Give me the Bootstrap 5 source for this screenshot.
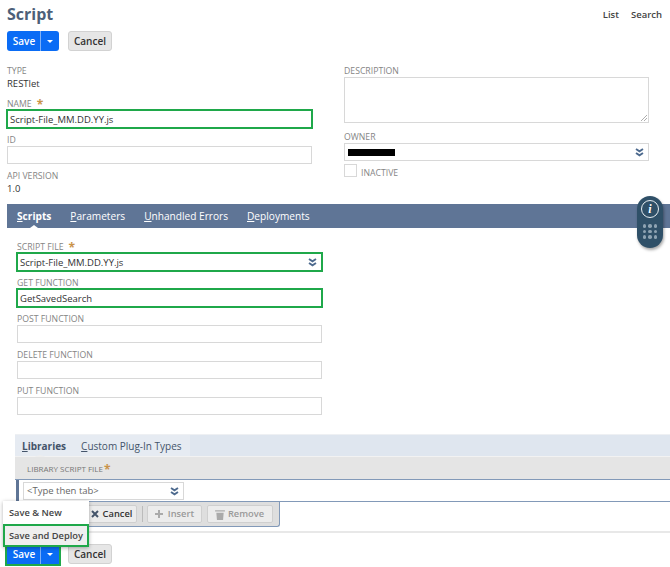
<!DOCTYPE html>
<html lang="en">
<head>
<meta charset="utf-8">
<title>Script</title>
<link href="https://cdn.jsdelivr.net/npm/bootstrap@5.3.0/dist/css/bootstrap.min.css" rel="stylesheet">
<style>
html,body{margin:0;height:567px;overflow:hidden;background:#fff}
body{width:670px;position:relative;font-family:"Open Sans",sans-serif;font-size:9.5px;color:#333;line-height:12px}
.page-head{height:31px;padding:0 7px}
.page-title{font-size:16px;line-height:28px;font-weight:700;color:#4d5f79;margin:0}
.head-links{gap:12px;padding:9px 1px 0 0;font-size:9.5px;font-weight:600;color:#444}
.action-bar{padding-left:7px;gap:9px;height:20px}
.save-group{height:20px;border-radius:3px;background:#0a6cf5;overflow:hidden;color:#fff;font-size:10px;font-weight:600}
.save-main{width:34px;padding-left:1px;text-align:center;line-height:20px;border-right:1px solid #7fb0f5}
.save-drop{width:18px;display:flex;align-items:center;justify-content:center}
.save-caret{width:0;height:0;border-left:3.5px solid transparent;border-right:3.5px solid transparent;border-top:3.5px solid #fff}
.cancel-btn{height:20px;width:44px;border:1px solid #d2d2d2;border-radius:3px;background:#e6e6e6;color:#333;font-size:10px;font-weight:600;line-height:18px;text-align:center}
.main-cols{padding:14px 0 0 7px;gap:32px;height:153px}
.field-col{width:305px}
.fld-label{height:12px;line-height:13px;color:#858585;font-size:8.7px;text-transform:uppercase;white-space:nowrap}
.req{color:#c9934a;font-size:12px;font-weight:700;margin-left:5px;line-height:10px;vertical-align:-2px}
.fld-value{height:12px;line-height:12px;margin-top:1px;color:#333;font-size:9.5px}
.fld-box{height:18px;border:1px solid #d8d8d8;background:#fff;font-size:9.5px;line-height:16px;padding:0 4px 0 2px;color:#333;display:flex;align-items:center;justify-content:space-between}
.fld-green{height:20px;margin:-1px -1px;border:2px solid #1fa84a;padding:1px 4px 0 2px}
.gap-a{margin-top:8px}
.gap-b{margin-top:6px}
.desc-box{height:46px;border:1px solid #d8d8d8;position:relative}
.resize-mark{position:absolute;right:1px;bottom:1px}
.owner-bar{width:47px;height:7px;background:#000;margin-left:1px}
.gap-c{margin-top:8px}
.check-row{gap:4px;margin-top:3px;height:14px}
.check-box{width:13px;height:13px;border:1px solid #d8d8d8}
.check-text{padding-top:3px;color:#858585;font-size:8.7px}
.tab-bar{margin-left:7px;height:24px;background:#5f7596;padding-left:10px;gap:19px;color:#fff;font-size:10.15px;line-height:25px;position:relative}
.tab-on{font-weight:700;position:relative}
.tab-on::after{content:"";position:absolute;left:50%;bottom:0;margin-left:-4px;border-left:4px solid transparent;border-right:4px solid transparent;border-bottom:3px solid #fff}
.tab-key{text-decoration:underline}
.script-fields{margin:13px 0 0 17px;width:305px;height:174px}
.sub-tabs{margin:19px 0 0 15px;height:22px;background:#dfe6ef;border-top:1px solid #eef0f3}
.sub-tab-area{width:175px;background:#e6ebf2;padding-left:7px;gap:15px;font-size:10px;line-height:22px;color:#44546a}
.sub-on{font-weight:700;position:relative}
.sub-on::after{content:"";position:absolute;left:12px;bottom:-1px;border-left:6px solid transparent;border-right:6px solid transparent;border-bottom:2px solid #eee}
.lib-head{margin-left:15px;height:24px;background:#e5e5e5;border-top:1px solid #f2f2f2;border-bottom:1px solid #8299b8;padding:6px 0 0 12px;font-size:8px;color:#777;text-transform:uppercase}
.lib-head .req{margin-left:1px}
.lib-row{margin-left:16px;height:22px;background:#fff;border-left:3px solid #5f7596;border-bottom:1px solid #8299b8;padding:2px 0 0 4px}
.lib-input{width:161px;height:18px;border:1px solid #d8d8d8;padding:0 4px 0 3px;color:#666;font-size:9.5px;display:flex;align-items:center;justify-content:space-between}
.lib-tools{margin-left:19px;width:261px;height:25px;background:#dedede;border:1px solid #8299b8;border-top:0;border-radius:0 0 3px 3px;padding:3px 0 0 66px;gap:4.5px}
.tool-btn{height:18px;background:#ececec;border:1px solid #cfcfcf;border-radius:2px;font-size:9.3px;font-weight:600;line-height:16px;color:#333;display:flex;align-items:center;justify-content:center;gap:4px}
.tool-off{color:#999}
.tool-cancel{width:51px}
.tool-sep{width:1px;height:16px;margin-top:1px;background:#bbb}
.tool-insert{width:55px;gap:5px}
.tool-remove{width:66px;gap:3px}
.end-rule{height:2px;background:#e8e8e8;margin:4px 0 0 15px}
.bottom-bar{padding:11px 0 0 7px;gap:9px;position:relative}
.green-ring{outline:2px solid #1fa84a;outline-offset:0;border-radius:0}
.save-menu{position:absolute;left:3px;top:501px;width:86px;height:46px;background:#fff;box-shadow:0 1px 4px rgba(0,0,0,.3);font-size:9.3px;font-weight:600;color:#444;z-index:5;white-space:nowrap}
.menu-item{height:23px;line-height:23px;padding-left:6px}
.menu-hot{background:#efefef;border:2px solid #1fa84a;line-height:19px;padding-left:4px}
.help-pod{position:absolute;left:637px;top:196px;width:26px;height:52px;background:#2f5068;border-radius:13px;box-shadow:1px 2px 3px rgba(0,0,0,.35);z-index:5;display:flex;flex-direction:column;align-items:center;padding-top:4px}
.help-info{width:18px;height:18px;border:1px solid #e8eef2;border-radius:50%;color:#fff;font-family:"Liberation Serif",serif;font-style:italic;font-weight:700;font-size:12px;line-height:16px;text-align:center}
.help-dots{display:grid;grid-template-columns:repeat(3,3.500px);gap:2px;margin-top:6px}
.help-dots span{width:3.5px;height:3.5px;border-radius:50%;background:#8ea3b2}
.chev{fill:none;stroke:#4d6a8e;stroke-width:1.9}
</style>
</head>
<body>
<div class="page-head d-flex justify-content-between">
  <h1 class="page-title">Script</h1>
  <div class="head-links d-flex"><span>List</span><span>Search</span></div>
</div>
<div class="action-bar d-flex">
  <div class="save-group d-flex"><div class="save-main">Save</div><div class="save-drop"><span class="save-caret"></span></div></div>
  <div class="cancel-btn">Cancel</div>
</div>
<div class="main-cols d-flex">
  <div class="field-col">
    <div class="fld-label">Type</div>
    <div class="fld-value">RESTlet</div>
    <div class="fld-label gap-a">Name<span class="req">*</span></div>
    <div class="fld-box fld-green">Script-File_MM.DD.YY.js</div>
    <div class="fld-label gap-b">ID</div>
    <div class="fld-box"></div>
    <div class="fld-label gap-b">API Version</div>
    <div class="fld-value">1.0</div>
  </div>
  <div class="field-col">
    <div class="fld-label">Description</div>
    <div class="desc-box"><svg class="resize-mark" width="7" height="7" viewBox="0 0 7 7"><path d="M1 7 7 1M4 7 7 4" stroke="#999" stroke-width=".8" fill="none"/></svg></div>
    <div class="fld-label gap-c">Owner</div>
    <div class="fld-box"><span class="owner-bar"></span><svg width="9" height="9" viewBox="0 0 9 9"><path class="chev" d="M1 1 4.500 3.300 8 1M1 5 4.500 7.300 8 5"/></svg></div>
    <div class="check-row d-flex"><span class="check-box"></span><span class="check-text">INACTIVE</span></div>
  </div>
</div>
<div class="tab-bar d-flex">
  <span class="tab-on"><span class="tab-key">S</span>cripts</span>
  <span><span class="tab-key">P</span>arameters</span>
  <span><span class="tab-key">U</span>nhandled Errors</span>
  <span><span class="tab-key">D</span>eployments</span>
</div>
<div class="script-fields">
  <div class="fld-label">Script File<span class="req">*</span></div>
  <div class="fld-box fld-green">Script-File_MM.DD.YY.js<svg width="9" height="9" viewBox="0 0 9 9"><path class="chev" d="M1 1 4.500 3.300 8 1M1 5 4.500 7.300 8 5"/></svg></div>
  <div class="fld-label gap-b">Get Function</div>
  <div class="fld-box fld-green">GetSavedSearch</div>
  <div class="fld-label gap-b">Post Function</div>
  <div class="fld-box"></div>
  <div class="fld-label gap-b">Delete Function</div>
  <div class="fld-box"></div>
  <div class="fld-label gap-b">Put Function</div>
  <div class="fld-box"></div>
</div>
<div class="sub-tabs d-flex">
  <div class="sub-tab-area d-flex"><span class="sub-on"><span class="tab-key">L</span>ibraries</span><span><span class="tab-key">C</span>ustom Plug-In Types</span></div>
</div>
<div class="lib-head">Library Script File<span class="req">*</span></div>
<div class="lib-row"><div class="lib-input">&lt;Type then tab&gt;<svg width="9" height="9" viewBox="0 0 9 9"><path class="chev" d="M1 1 4.500 3.300 8 1M1 5 4.500 7.300 8 5"/></svg></div></div>
<div class="lib-tools d-flex">
  <div class="tool-btn tool-cancel"><svg width="8" height="8" viewBox="0 0 8 8"><path d="M1 1 7 7M7 1 1 7" stroke="#44546a" stroke-width="2"/></svg>Cancel</div>
  <span class="tool-sep"></span>
  <div class="tool-btn tool-off tool-insert"><svg width="8" height="8" viewBox="0 0 8 8"><path d="M4 0V8M0 4H8" stroke="#aaa" stroke-width="2"/></svg>Insert</div>
  <div class="tool-btn tool-off tool-remove"><svg width="10" height="11" viewBox="0 0 8 9"><path d="M0 1H8V2H0ZM1 3H7L6.500 9H1.500Z" fill="#aaa"/></svg>Remove</div>
</div>
<div class="end-rule"></div>
<div class="bottom-bar d-flex">
  <div class="save-group green-ring d-flex"><div class="save-main">Save</div><div class="save-drop"><span class="save-caret"></span></div></div>
  <div class="cancel-btn">Cancel</div>
</div>
<div class="save-menu">
  <div class="menu-item">Save &amp; New</div>
  <div class="menu-item menu-hot">Save and Deploy</div>
</div>
<div class="help-pod">
  <div class="help-info">i</div>
  <div class="help-dots"><span></span><span></span><span></span><span></span><span></span><span></span><span></span><span></span><span></span></div>
</div>
<script src="https://cdn.jsdelivr.net/npm/bootstrap@5.3.0/dist/js/bootstrap.bundle.min.js"></script>
</body>
</html>
